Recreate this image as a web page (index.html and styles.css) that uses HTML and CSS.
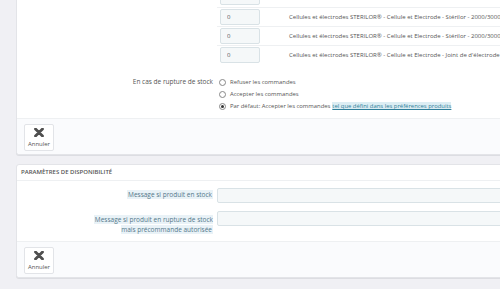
FILE: index.html
```html
<!DOCTYPE html>
<html lang="fr">
<head>
    <meta charset="UTF-8">
    <title>Quantités</title>
    <link rel="stylesheet" href="styles.css">
</head>
<body>
<div class="page">

    <!-- Stock panel -->
    <div class="panel">
        <div class="panel-body">
            <div class="form-row">
                <div class="form-label"></div>
                <div class="form-control">
                    <table class="combo-table">
                        <tr><td class="qty"><input class="field" type="text" value=""></td><td class="name"></td></tr>
                        <tr><td class="qty"><input class="field" type="text" value="0"></td><td class="name">Cellules et électrodes STERILOR® - Cellule et Electrode - Stérilor - 2000/3000</td></tr>
                        <tr><td class="qty"><input class="field" type="text" value="0"></td><td class="name">Cellules et électrodes STERILOR® - Cellule et Electrode - Stérilor - 2000/3000</td></tr>
                        <tr><td class="qty"><input class="field" type="text" value="0"></td><td class="name">Cellules et électrodes STERILOR® - Cellule et Electrode - Joint de d'électrode</td></tr>
                    </table>
                </div>
            </div>

            <div class="form-row oos-row">
                <div class="form-label">En cas de rupture de stock</div>
                <div class="form-control radios">
                    <label class="radio"><span class="dot"></span>Refuser les commandes</label>
                    <label class="radio"><span class="dot"></span>Accepter les commandes</label>
                    <label class="radio"><span class="dot checked"></span>Par défaut: Accepter les commandes <a class="pref-link" href="#">tel que défini dans les préférences produits</a></label>
                </div>
            </div>
        </div>
        <div class="panel-footer">
            <button class="btn-cancel" type="button">
                <svg width="10" height="9" viewBox="0 0 10 9"><path d="M1.5 1 L8.5 8 M8.5 1 L1.5 8" stroke="#4f4f4f" stroke-width="2.8" stroke-linecap="round"/></svg>
                <span>Annuler</span>
            </button>
        </div>
    </div>

    <!-- Availability panel -->
    <div class="panel">
        <div class="panel-heading">Paramètres de disponibilité</div>
        <div class="panel-body avail-body">
            <div class="form-row">
                <div class="form-label"><span class="hint">Message si produit en stock</span></div>
                <div class="form-control"><input class="field wide" type="text"></div>
            </div>
            <div class="form-row second">
                <div class="form-label"><span class="hint">Message si produit en rupture de stock<br>mais précommande autorisée</span></div>
                <div class="form-control"><input class="field wide" type="text"></div>
            </div>
        </div>
        <div class="panel-footer">
            <button class="btn-cancel" type="button">
                <svg width="10" height="9" viewBox="0 0 10 9"><path d="M1.5 1 L8.5 8 M8.5 1 L1.5 8" stroke="#4f4f4f" stroke-width="2.8" stroke-linecap="round"/></svg>
                <span>Annuler</span>
            </button>
        </div>
    </div>

</div>
</body>
</html>
```

FILE: styles.css
```css
/* Global */
* {
    margin: 0;
    padding: 0;
    box-sizing: border-box;
}

body {
    background: #f0f0f4;
    font-family: 'Open Sans', 'Liberation Sans', sans-serif;
    font-size: 6.5px;
    color: #555;
    overflow: hidden;
}

.page {
    width: 620px;
    margin-top: -21px;
    padding-left: 16px;
}

/* Panels */
.panel {
    background: #fff;
    border: 1px solid #e3e4e8;
    border-radius: 3px;
    box-shadow: 0 1px 0 #dcdde2;
    margin-bottom: 9px;
}

.panel-heading {
    height: 16px;
    line-height: 15px;
    padding-left: 4px;
    border-bottom: 1px solid #eef0f2;
    font-size: 6px;
    font-weight: 600;
    text-transform: uppercase;
    color: #555;
}

.panel-body {
    padding: 8px 0 6px;
}

.panel-footer {
    background: #fafbfd;
    border-top: 1px solid #eef0f2;
    padding: 5px 7px 3px;
    border-radius: 0 0 3px 3px;
}

/* Form rows */
.form-row {
    display: flex;
    gap: 4px;
}

.form-label {
    width: 196px;
    flex-shrink: 0;
    text-align: right;
}

.form-control {
    flex: 1;
}

/* Combination table */
.combo-table {
    border-collapse: collapse;
    table-layout: fixed;
    width: 100%;
}

.combo-table td {
    border-top: 1px solid #eef0f2;
    height: 19px;
    vertical-align: middle;
}

.combo-table tr:first-child td {
    border-top: none;
}

.combo-table .qty {
    width: 72px;
    padding-left: 3px;
}

.combo-table .name {
    white-space: nowrap;
    font-size: 6px;
    color: #555;
}

.field {
    display: block;
    width: 40px;
    height: 16px;
    background: #f5f8f9;
    border: 1px solid #d9e2e6;
    border-radius: 2px;
    padding-left: 6px;
    font-family: inherit;
    font-size: 6px;
    color: #555;
    outline: none;
}

.field.wide {
    width: 100%;
    height: 15px;
}

/* Out of stock radios */
.oos-row {
    margin-top: 12px;
}

.oos-row .form-label {
    line-height: 12px;
}

.radios {
    display: flex;
    flex-direction: column;
}

.radio {
    display: flex;
    align-items: center;
    height: 12px;
    font-size: 5.9px;
    white-space: nowrap;
}

.dot {
    width: 7px;
    height: 7px;
    border: 1px solid #888;
    border-radius: 50%;
    margin: 0 4px 0 2px;
    position: relative;
}

.dot.checked::after {
    content: '';
    position: absolute;
    left: 1px;
    top: 1px;
    width: 3px;
    height: 3px;
    border-radius: 50%;
    background: #333;
}

.pref-link {
    margin-left: 2px;
    color: #2f7f9a;
    background: #dcedf3;
    text-decoration: underline;
}

/* Availability panel */
.avail-body {
    padding: 7px 0 6px;
}

.avail-body .form-label {
    padding-top: 4px;
    line-height: 10px;
}

.avail-body .form-row:first-child .form-label {
    padding-top: 2px;
}

.avail-body .form-row.second {
    margin-top: 8px;
}

.hint {
    background: #e9f2f7;
    color: #54788a;
    padding: 0 1px;
}

/* Cancel button */
.btn-cancel {
    width: 30px;
    height: 27px;
    background: #fff;
    border: 1px solid #e2e4e8;
    border-radius: 2px;
    display: flex;
    flex-direction: column;
    align-items: center;
    justify-content: center;
    gap: 3px;
    font-family: inherit;
    font-size: 6px;
    color: #555;
    cursor: pointer;
}
```
